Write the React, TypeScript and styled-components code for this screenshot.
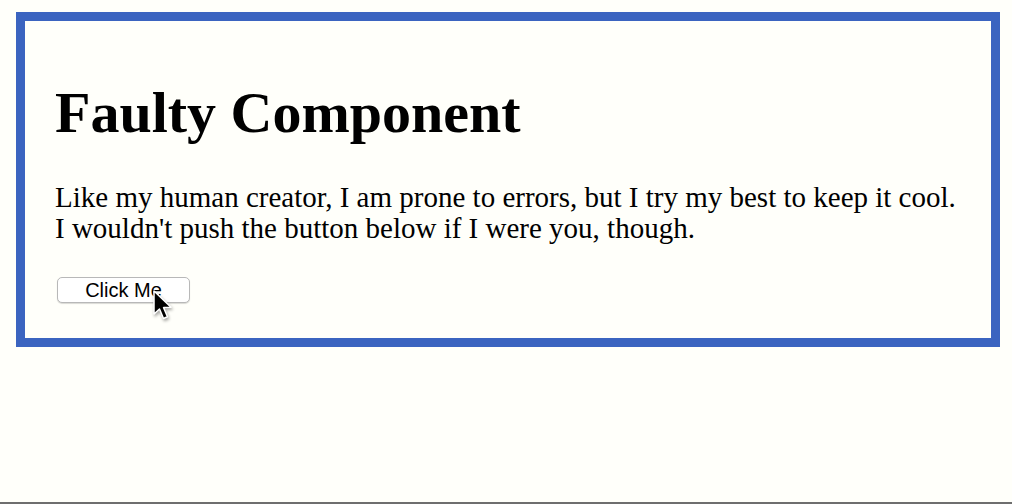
import React from 'react'
import styled, { createGlobalStyle } from 'styled-components'

const GlobalStyle = createGlobalStyle`
    html, body {
        margin: 0;
        padding: 0;
        background: #fffffa;
    }
    body {
        width: 1012px;
        height: 504px;
        overflow: hidden;
        font-family: "Liberation Serif", "Times New Roman", serif;
        color: #000;
        border-bottom: 2px solid #6e6e6e;
        box-sizing: border-box;
    }
`

const Page = styled.div`
    padding: 12px 12px 0 16px;
`

const Card = styled.div`
    border: 9px solid #3b64c0;
    padding: 63px 30px 0 30px;
    height: 335px;
    box-sizing: border-box;
`

const Title = styled.h1`
    font-size: 58px;
    font-weight: bold;
    line-height: 58px;
    margin: 0 0 40px;
`

const Text = styled.p`
    font-size: 29px;
    line-height: 30.5px;
    margin: 0 0 34px;
`

const ButtonWrap = styled.div`
    position: relative;
    display: inline-block;
`

const Button = styled.button`
    font-family: "Liberation Sans", Arial, sans-serif;
    font-size: 20px;
    width: 133px;
    height: 26px;
    margin-left: 2px;
    padding: 0;
    background: #fff;
    color: #000;
    border: 1px solid #b8b8b8;
    border-radius: 5px;
    box-shadow: 0 1px 1px rgba(0, 0, 0, 0.15);
`

const Cursor = styled.svg`
    position: absolute;
    left: 98px;
    top: 13px;
    pointer-events: none;
    filter: drop-shadow(1px 2px 1.5px rgba(0, 0, 0, 0.35));
`

export default function App() {
    return (
        <>
            <GlobalStyle />
            <Page>
                <Card>
                    <Title>Faulty Component</Title>
                    <Text>
                        Like my human creator, I am prone to errors, but I try my best to keep it cool.
                        <br />
                        I wouldn't push the button below if I were you, though.
                    </Text>
                    <ButtonWrap>
                        <Button>Click Me</Button>
                        <Cursor width="22" height="34" viewBox="0 0 22 34">
                            <path
                                d="M1 1 L1 24 L6.5 19 L10.5 28.5 L14.5 26.8 L10.6 17.6 L18 17.3 Z"
                                fill="#000"
                                stroke="#fff"
                                strokeWidth="1.5"
                                strokeLinejoin="round"
                            />
                        </Cursor>
                    </ButtonWrap>
                </Card>
            </Page>
        </>
    )
}
